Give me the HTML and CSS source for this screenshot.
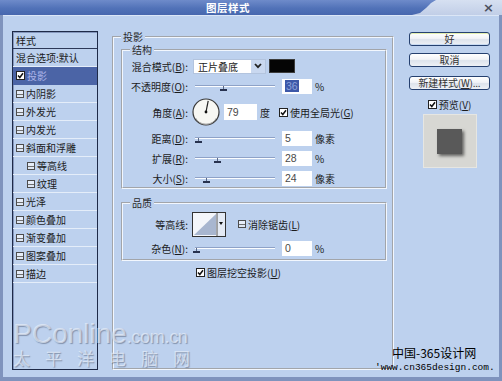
FILE: index.html
```html
<!DOCTYPE html>
<html lang="zh-CN">
<head>
<meta charset="utf-8">
<title>图层样式</title>
<link rel="stylesheet" href="styles.css">
</head>
<body>
<div class="dialog">
  <div class="titlebar">
    <div class="tab"><span class="caption">图层样式</span></div>
    <span class="close">×</span>
  </div>

  <div class="client">
    <ul class="styles">
      <li class="head">样式</li>
      <li>混合选项:默认</li>
      <li class="on"><svg class="chk" width="9" height="9" viewBox="0 0 9 9"><rect x=".5" y=".5" width="8" height="8" fill="#fff" stroke="#222"/><path d="M2 4.5 L3.8 6.5 L7 2.3" fill="none" stroke="#111" stroke-width="1.5"/></svg>投影</li>
      <li><i class="box"></i>内阴影</li>
      <li><i class="box"></i>外发光</li>
      <li><i class="box"></i>内发光</li>
      <li><i class="box"></i>斜面和浮雕</li>
      <li class="sub"><i class="box"></i>等高线</li>
      <li class="sub"><i class="box"></i>纹理</li>
      <li><i class="box"></i>光泽</li>
      <li><i class="box"></i>颜色叠加</li>
      <li><i class="box"></i>渐变叠加</li>
      <li><i class="box"></i>图案叠加</li>
      <li><i class="box"></i>描边</li>
    </ul>

    <fieldset class="group outer">
      <legend>投影</legend>

      <fieldset class="group structure">
        <legend>结构</legend>
        <div class="form struct">
          <label>混合模式(<u>B</u>):</label>
          <div class="ctl">
            <div class="select"><span>正片叠底</span><i class="arrow"><svg width="8" height="6" viewBox="0 0 8 6"><path d="M1 1 L4 4.2 L7 1" fill="none" stroke="#222" stroke-width="1.8"/></svg></i></div>
            <div class="swatch"></div>
          </div>

          <label>不透明度(<u>O</u>):</label>
          <div class="ctl">
            <div class="slider"><i class="thumb" style="left: 31px"></i></div>
            <div class="num"><span class="sel">36</span></div>
            <span class="unit">%</span>
          </div>

          <label>角度(<u>A</u>):</label>
          <div class="ctl">
            <svg class="dial" width="28" height="28" viewBox="0 0 28 28"><circle cx="14" cy="14" r="13" fill="#f7f7f3" stroke="#3a3a3a" stroke-width="1.2"/><path d="M3.5 20 A12 12 0 0 0 24.5 20" fill="none" stroke="#999" stroke-width="1"/><line x1="14" y1="14" x2="16.2" y2="2.8" stroke="#222" stroke-width="1.2"/><circle cx="14" cy="14" r="1.4" fill="#111"/></svg>
            <div class="num angle">79</div>
            <span class="unit">度</span>
            <svg class="chk global" width="9" height="9" viewBox="0 0 9 9"><rect x=".5" y=".5" width="8" height="8" fill="#fff" stroke="#222"/><path d="M2 4.5 L3.8 6.5 L7 2.3" fill="none" stroke="#111" stroke-width="1.5"/></svg>
            <span class="opt">使用全局光(<u>G</u>)</span>
          </div>

          <label>距离(<u>D</u>):</label>
          <div class="ctl">
            <div class="slider"><i class="thumb" style="left: 6px"></i></div>
            <div class="num">5</div>
            <span class="unit">像素</span>
          </div>

          <label>扩展(<u>R</u>):</label>
          <div class="ctl">
            <div class="slider"><i class="thumb" style="left: 25px"></i></div>
            <div class="num">28</div>
            <span class="unit">%</span>
          </div>

          <label>大小(<u>S</u>):</label>
          <div class="ctl">
            <div class="slider"><i class="thumb" style="left: 14px"></i></div>
            <div class="num">24</div>
            <span class="unit">像素</span>
          </div>
        </div>
      </fieldset>

      <fieldset class="group quality">
        <legend>品质</legend>
        <div class="form qual">
          <label>等高线:</label>
          <div class="ctl">
            <svg class="contour" width="34" height="25" viewBox="0 0 34 25"><rect x=".5" y=".5" width="33" height="24" fill="#f4f6fa" stroke="#333"/><polygon points="2,23 24,2 24,23" fill="#a8b6cf"/><rect x="25" y="1" width="8" height="23" fill="#e4eaf4"/><line x1="25" y1="1" x2="25" y2="24" stroke="#555"/><polygon points="27,10 31,10 29,13" fill="#111"/></svg>
            <i class="box aa"></i>
            <span class="opt">消除锯齿(<u>L</u>)</span>
          </div>

          <label>杂色(<u>N</u>):</label>
          <div class="ctl">
            <div class="slider"><i class="thumb" style="left: 4px"></i></div>
            <div class="num">0</div>
            <span class="unit">%</span>
          </div>
        </div>
      </fieldset>

      <div class="knock">
        <svg class="chk" width="9" height="9" viewBox="0 0 9 9"><rect x=".5" y=".5" width="8" height="8" fill="#fff" stroke="#222"/><path d="M2 4.5 L3.8 6.5 L7 2.3" fill="none" stroke="#111" stroke-width="1.5"/></svg>
        <span class="opt">图层挖空投影(<u>U</u>)</span>
      </div>
    </fieldset>

    <div class="side">
      <div class="btn default">好</div>
      <div class="btn">取消</div>
      <div class="btn">新建样式(<u>W</u>)...</div>
      <div class="preview-check">
        <svg class="chk" width="9" height="9" viewBox="0 0 9 9"><rect x=".5" y=".5" width="8" height="8" fill="#fff" stroke="#222"/><path d="M2 4.5 L3.8 6.5 L7 2.3" fill="none" stroke="#111" stroke-width="1.5"/></svg>
        <span class="opt">预览(<u>V</u>)</span>
      </div>
      <div class="preview"><div class="swatch-shadow"></div></div>
    </div>
  </div>

  <div class="wm-pc">PConline<small>.com.cn</small></div>
  <div class="wm-tpy">太平洋电脑网</div>
  <div class="wm-365">中国-365设计网</div>
  <div class="wm-url">'www.cn365design.com.</div>
</div>
</body>
</html>
```

FILE: styles.css
```css
* {
    box-sizing: border-box;
}

html, body {
    margin: 0;
}

body {
    width: 502px;
    height: 381px;
    overflow: hidden;
    font-family: "Noto Sans CJK SC", "Liberation Sans", sans-serif;
    font-size: 10px;
    color: #1b1b1b;
    background: #bdd1ee;
}

u {
    text-decoration: underline;
}

.dialog {
    position: relative;
    height: 381px;
    display: flex;
    flex-direction: column;
    background: #7f93bd;
}

/* title bar */
.titlebar {
    height: 15px;
    display: flex;
    align-items: center;
    overflow: hidden;
    background: linear-gradient(#d6e0f1, #c1cee7);
}

.tab {
    width: 436px;
    height: 15px;
    padding-left: 20px;
    display: flex;
    align-items: center;
    justify-content: center;
    background: linear-gradient(#6e8bca, #5172b8 55%, #4767ae);
    clip-path: polygon(0 0, 436px 0, 431px 3px, 426px 8px, 420px 13px, 412px 15px, 0 15px);
}

.caption {
    color: #fff;
    font-weight: bold;
    font-size: 10.5px;
    line-height: 13px;
    letter-spacing: 0.5px;
}

.close {
    margin-left: auto;
    margin-right: 8px;
    font: bold 13px/13px "DejaVu Sans", sans-serif;
    color: #4a505e;
}

/* client area */
.client {
    flex: 1;
    margin: 0 3px 4px;
    padding: 15px 9px 7px;
    display: flex;
    background: #bdd1ee;
    border-top: 1px solid #dbe6f6;
}

/* style list */
.styles {
    list-style: none;
    margin: 0;
    padding: 0;
    width: 86px;
    border: 1px solid #1e2a48;
    box-shadow: inset 1px 1px 0 #8597bd;
}

.styles li {
    height: 18px;
    padding-left: 3px;
    display: flex;
    align-items: center;
    gap: 2px;
    white-space: nowrap;
    border-bottom: 1px solid #e4edf9;
}

.styles .head {
    height: 17px;
    border-bottom-color: #2c3858;
}

.styles .sub {
    padding-left: 14px;
}

.styles .on {
    background: #4b64a6;
    color: #aab3e8;
    border-bottom-color: #4b64a6;
}

.box {
    display: inline-block;
    flex: none;
    width: 8px;
    height: 8px;
    border: 1px solid #4c4c4c;
    background: linear-gradient(#e6edf8 3px, #6f6f6f 3px, #6f6f6f 4px, #dfe7f3 4px);
}

.chk {
    flex: none;
    display: block;
}

/* group boxes */
.group {
    margin: 0;
    min-width: 0;
    border: 2px groove #f2f7fe;
}

.group legend {
    padding: 0 2px;
    line-height: 12px;
    color: #2a2a2a;
}

.outer {
    width: 282px;
    margin-left: 14px;
    padding: 0 5px 0 7px;
}

.outer > .structure {
    margin-top: 1px;
    padding: 2px 5px 1px 7px;
}

.outer > .quality {
    margin-top: 8px;
    padding: 3px 5px 4px 7px;
}

.form {
    display: grid;
    grid-template-columns: 58px auto;
    column-gap: 4px;
    row-gap: 4px;
    align-items: center;
}

.struct {
    grid-template-rows: 16px 16px 28px 16px 16px 16px;
}

.qual {
    grid-template-rows: 24px 14px;
    row-gap: 5px;
}

.form > label {
    text-align: right;
    white-space: nowrap;
}

.ctl {
    display: flex;
    align-items: center;
    height: 100%;
    white-space: nowrap;
}

.select {
    display: flex;
    width: 73px;
    height: 15px;
    margin-left: 1px;
    background: #fff;
    border: 1px solid #b3c4de;
}

.select span {
    flex: 1;
    padding-left: 4px;
    line-height: 13px;
}

.arrow {
    width: 14px;
    display: flex;
    align-items: center;
    justify-content: center;
    background: #c9d8f0;
}

.swatch {
    width: 26px;
    height: 14px;
    margin-left: 3px;
    background: #050505;
    border: 1px solid #3c3c3c;
}

.slider {
    position: relative;
    width: 85px;
    height: 16px;
    flex: none;
}

.slider::before {
    content: "";
    position: absolute;
    left: 3px;
    right: 2px;
    top: 7px;
    height: 2px;
    background: linear-gradient(#8ea2c7 50%, #fbfdff 50%);
}

.thumb {
    position: absolute;
    top: 8px;
    width: 7px;
    height: 5px;
    margin-left: -3px;
    border-bottom: 2px solid #27324f;
}

.thumb::before {
    content: "";
    position: absolute;
    left: 3px;
    top: 0;
    width: 1px;
    height: 3px;
    background: #5a6784;
}

.num {
    width: 30px;
    height: 15px;
    margin-left: 5px;
    padding-left: 3px;
    flex: none;
    background: #fff;
    font: 10.5px/15px "Liberation Sans", sans-serif;
    color: #4a4a4a;
}

.num .sel {
    display: inline-block;
    background: #3d58a8;
    color: #8da2da;
    padding: 0 1px;
    line-height: 12px;
}

.unit {
    margin-left: 3px;
}

.dial {
    flex: none;
    display: block;
}

.angle {
    width: 33px;
    height: 16px;
    margin-left: 4px;
    line-height: 16px;
}

.global {
    margin-left: 9px;
}

.opt {
    margin-left: 2px;
}

.contour {
    flex: none;
    display: block;
}

.aa {
    margin-left: 12px;
}

.knock {
    margin-top: 4px;
    height: 14px;
    padding-left: 75px;
    display: flex;
    align-items: center;
}

/* right column */
.side {
    width: 81px;
    margin-left: 15px;
    display: flex;
    flex-direction: column;
    align-items: center;
}

.btn {
    width: 81px;
    height: 14px;
    margin-top: 7px;
    border: 1px solid #25406f;
    border-radius: 3px;
    background: linear-gradient(#ffffff, #f1f3f7 45%, #dde3ec 55%, #eef1f6);
    text-align: center;
    line-height: 12px;
    color: #333;
    white-space: nowrap;
}

.btn.default {
    margin-top: 1px;
    box-shadow: inset 0 1px 0 #e3efb0, inset 0 -1px 0 #c9dbf2;
}

.btn:nth-child(3) {
    margin-top: 9px;
    letter-spacing: -0.2px;
}

.preview-check {
    margin-top: 9px;
    height: 11px;
    display: flex;
    align-items: center;
}

.preview {
    margin-top: 4px;
    width: 54px;
    height: 54px;
    display: flex;
    align-items: center;
    justify-content: center;
    background: #d7d7d3;
    border: 1px solid #e6e6e2;
}

.swatch-shadow {
    width: 25px;
    height: 25px;
    background: #595959;
    box-shadow: 2px 2px 3px rgba(0, 0, 0, 0.55);
}

/* watermarks laid over the dialog */
.wm-pc,
.wm-tpy {
    position: absolute;
    left: 13px;
    color: rgba(240, 244, 252, 0.62);
    text-shadow: 1px 1px 1px rgba(60, 72, 96, 0.45);
    white-space: nowrap;
}

.wm-pc {
    top: 320px;
    font: 28px/28px "Liberation Sans", sans-serif;
}

.wm-pc small {
    font-size: 18px;
    letter-spacing: -0.3px;
}

.wm-tpy {
    top: 349px;
    font-size: 17px;
    line-height: 17px;
    letter-spacing: 15px;
}

.wm-365 {
    position: absolute;
    left: 392px;
    top: 346px;
    font-size: 12px;
    line-height: 14px;
    color: #000;
}

.wm-url {
    position: absolute;
    left: 375px;
    top: 362px;
    font: 9.5px/11px "Liberation Mono", monospace;
    color: #000;
}
```
